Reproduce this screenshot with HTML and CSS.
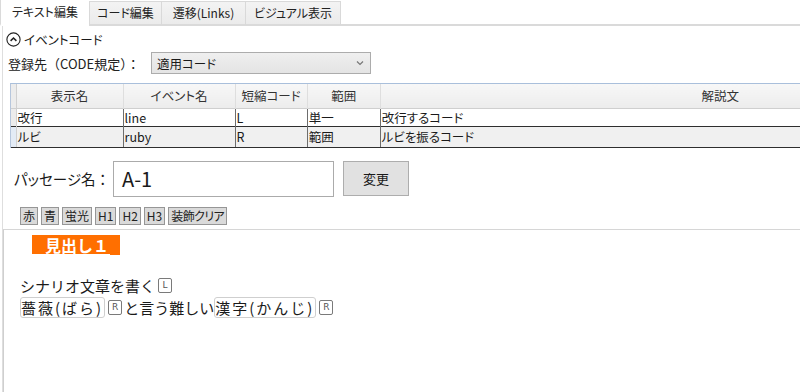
FILE: index.html
```html
<!DOCTYPE html>
<html lang="ja">
<head>
<meta charset="utf-8">
<link rel="stylesheet" href="styles.css">
</head>
<body>
<div class="tabs">
  <div class="tab active">テキスト編集</div>
  <div class="tab t2">コード編集</div>
  <div class="tab t3">遷移(Links)</div>
  <div class="tab t4">ビジュアル表示</div>
  <div class="tab-fill"></div>
</div>
<div class="page">
  <div class="event-head">
    <svg class="circ" width="15" height="15" viewBox="0 0 15 15"><circle cx="7.5" cy="7.5" r="6.6" fill="none" stroke="#222" stroke-width="1.1"/><path d="M4.6 8.9 L7.5 6 L10.4 8.9" fill="none" stroke="#222" stroke-width="1.5"/></svg>
    <span class="event-title">イベントコード</span>
  </div>
  <div class="reg-row">
    <span class="reg-label">登録先（CODE規定）：</span>
    <div class="select"><span>適用コード</span><svg width="8" height="6" viewBox="0 0 8 6"><path d="M1 1.5 L4 4.5 L7 1.5" fill="none" stroke="#777" stroke-width="1.2"/></svg></div>
  </div>
  <div class="grid-wrap">
    <table class="grid">
      <colgroup><col class="c0"><col class="c1"><col class="c2"><col class="c3"><col class="c4"><col class="c5"></colgroup>
      <thead>
        <tr><th class="rh"></th><th>表示名</th><th>イベント名</th><th>短縮コード</th><th>範囲</th><th>解説文</th></tr>
      </thead>
      <tbody>
        <tr class="r1"><td class="rh"></td><td>改行</td><td>line</td><td>L</td><td>単一</td><td>改行するコード</td></tr>
        <tr class="r2"><td class="rh sel"></td><td>ルビ</td><td>ruby</td><td>R</td><td>範囲</td><td>ルビを振るコード</td></tr>
      </tbody>
    </table>
  </div>
  <div class="passage-row">
    <span class="passage-label">パッセージ名<span class="colon">：</span></span>
    <div class="input">A-1</div>
    <div class="btn">変更</div>
  </div>
  <div class="toolbar">
    <span class="tb">赤</span><span class="tb">青</span><span class="tb">蛍光</span><span class="tb">H1</span><span class="tb">H2</span><span class="tb">H3</span><span class="tb tb-clear">装飾クリア</span>
  </div>
  <div class="editor">
    <div class="h1"><span class="h1-text">見出し１</span></div>
    <div class="blank"></div>
    <div class="line">シナリオ文章を書く<span class="badge">L</span></div>
    <div class="line"><span class="box">薔薇(ばら)</span><span class="badge">R</span>と言う難しい<span class="box">漢字(かんじ)</span><span class="badge">R</span></div>
  </div>
</div>
</body>
</html>
```
FILE: styles.css
```css
* { box-sizing: border-box; }
html, body { margin: 0; padding: 0; }
body {
  width: 800px;
  height: 392px;
  overflow: hidden;
  background: #fff;
  color: #1a1a1a;
  font-family: "Noto Sans CJK JP", "Noto Sans", sans-serif;
}
.tabs {
  display: flex;
  height: 26px;
}
.tab {
  height: 26px;
  font-size: 12px;
  line-height: 23px;
  text-align: center;
  font-feature-settings: "palt";
  border-bottom: 2px solid #dadada;
  color: #222;
}
.tab.active {
  width: 89px;
  background: #fff;
  border-bottom: 2px solid #fff;
  border-left: 1px solid #dadada;
  line-height: 24px;
}
.tab.t2, .tab.t3, .tab.t4 {
  margin-top: 1px;
  height: 25px;
  background: linear-gradient(#f3f3f3, #ebebeb);
  border-top: 1px solid #d9d9d9;
  border-right: 1px solid #d9d9d9;
  line-height: 22px;
}
.tab.t2 { width: 73px; border-left: 1px solid #d9d9d9; }
.tab.t3 { width: 84px; }
.tab.t4 { width: 95px; }
.tab-fill { flex: 1; border-bottom: 2px solid #dadada; }

.page {
  margin-left: 2px;
  border-left: 1px solid #dedede;
  height: 366px;
  display: flex;
  flex-direction: column;
}
.event-head {
  display: flex;
  align-items: center;
  height: 17px;
  margin-top: 5px;
  padding-left: 3px;
  gap: 3px;
}
.event-title {
  font-size: 12.5px;
  font-feature-settings: "palt";
  line-height: 17px;
}
.reg-row {
  display: flex;
  align-items: center;
  margin-top: 4px;
  height: 22px;
}
.reg-label {
  width: 148px;
  padding-left: 5px;
  font-size: 13px;
  color: #222;
}
.select {
  width: 220px;
  height: 22px;
  border: 1px solid #acacac;
  background: linear-gradient(#efefef, #e4e4e4);
  display: flex;
  align-items: center;
  justify-content: space-between;
  padding: 0 6px 0 5px;
  font-size: 12.5px;
  font-feature-settings: "palt";
}

.grid-wrap {
  margin-top: 9px;
  margin-left: 7px;
  width: 790px;
  overflow: hidden;
  border-top: 1px solid #a9bfdb;
  border-left: 1px solid #b6c6dc;
}
.grid {
  border-collapse: collapse;
  table-layout: fixed;
  width: 1050px;
  font-size: 12.5px;
}
.c0 { width: 5px; }
.c1 { width: 107px; }
.c2 { width: 112px; }
.c3 { width: 72px; }
.c4 { width: 73px; }
.c5 { width: 680px; }
.grid th {
  height: 24px;
  font-weight: normal;
  color: #333;
  background: linear-gradient(#f7f7f7, #ececec);
  border-right: 1px solid #dedede;
  padding: 0;
  font-feature-settings: "palt";
}
.grid td {
  padding: 0 0 0 1px;
  border-right: 1px solid #6d6d6d;
  white-space: nowrap;
  overflow: hidden;
  font-feature-settings: "palt";
}
.grid td.rh, .grid th.rh {
  background: #ececec;
  border-right: 1px solid #d0d0d0;
  padding: 0;
}
.grid td.rh.sel { background: #e3ebf5; }
.r1 td { height: 18px; background: #fff; border-top: 1px solid #cfcfcf; line-height: 17px; }
.r2 td { height: 21px; background: #f0f0f0; border-top: 1px solid #2e2e2e; border-bottom: 1px solid #2e2e2e; line-height: 19px; }

.passage-row {
  display: flex;
  align-items: center;
  margin-top: 13px;
  height: 36px;
}
.passage-label {
  width: 110px;
  padding-left: 11px;
  font-size: 14.5px;
  font-feature-settings: "palt";
  white-space: nowrap;
}
.colon {
  font-feature-settings: normal;
}
.input {
  width: 221px;
  height: 36px;
  border: 1px solid #ababab;
  background: #fff;
  font-size: 20px;
  line-height: 34px;
  padding-left: 8px;
}
.btn {
  margin-left: 9px;
  width: 66px;
  height: 35px;
  background: #e1e1e1;
  border: 1px solid #adadad;
  font-size: 13px;
  line-height: 33px;
  text-align: center;
}
.toolbar {
  display: flex;
  gap: 3px;
  margin-top: 10px;
  padding-left: 17px;
  height: 18px;
}
.tb {
  height: 18px;
  padding: 0 2px;
  background: #dadada;
  border: 1px solid #969696;
  font-size: 12px;
  line-height: 16px;
  font-feature-settings: "palt";
  color: #222;
}
.tb-clear {
  letter-spacing: -0.6px;
}
.editor {
  flex: 1;
  margin-top: 4px;
  border-top: 1px solid #d6d6d6;
  border-left: 1px solid #cfcfcf;
  padding: 5px 0 0 16px;
  font-size: 15px;
}
.h1 {
  margin-left: 12px;
  width: 88px;
  height: 20px;
  background: #ff6f00;
}
.h1-text {
  display: inline-block;
  width: 78px;
  padding-left: 13px;
  height: 19px;
  border-bottom: 1px solid #fff;
  color: #fff;
  font-weight: bold;
  font-size: 16px;
  line-height: 19px;
}
.blank { height: 20px; }
.line {
  height: 22px;
  line-height: 22px;
  display: flex;
  align-items: center;
  white-space: nowrap;
}
.badge {
  display: inline-block;
  width: 14px;
  height: 15px;
  margin: 0 2px 0 3px;
  border: 1px solid #7a7a7a;
  border-radius: 2px;
  font-size: 9px;
  line-height: 13px;
  text-align: center;
  color: #555;
  font-family: "DejaVu Sans", sans-serif;
}
.box {
  display: inline-block;
  height: 21px;
  line-height: 20px;
  border: 1px solid #cfcfcf;
  border-radius: 3px;
  padding: 0 1px 0 0;
  letter-spacing: 2px;
}
```
